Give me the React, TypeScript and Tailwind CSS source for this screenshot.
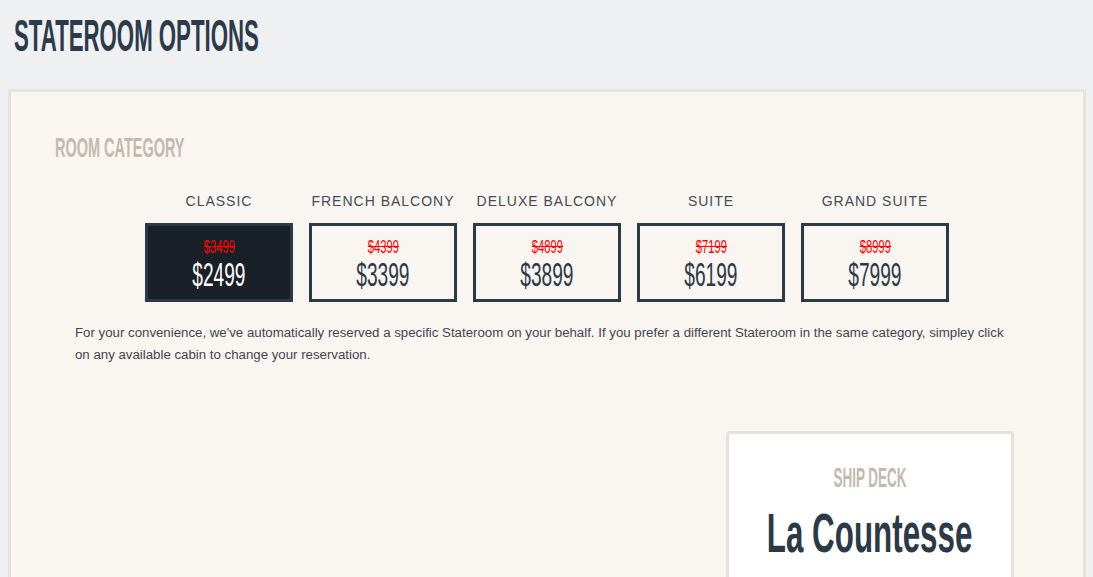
import React from 'react';

const categories = [
  { name: 'CLASSIC', was: '$3499', now: '$2499', selected: true },
  { name: 'FRENCH BALCONY', was: '$4399', now: '$3399' },
  { name: 'DELUXE BALCONY', was: '$4899', now: '$3899' },
  { name: 'SUITE', was: '$7199', now: '$6199' },
  { name: 'GRAND SUITE', was: '$8999', now: '$7999' },
];

const display = { fontFamily: '"Liberation Sans", Arial, sans-serif' };

export default function App() {
  return (
    <div className="min-h-[577px] bg-[#eff0f2] overflow-hidden" style={display}>
      {/* Page title */}
      <div className="pl-[14px] pt-[14px] h-[89px]">
        <h1 className="inline-block origin-left scale-x-[0.505] text-[44px] leading-[44px] font-bold text-[#2c3a4a] whitespace-nowrap">
          STATEROOM OPTIONS
        </h1>
      </div>

      {/* Options panel */}
      <div className="ml-2 mr-[7px] border-[3px] border-[#e6e2dc] bg-[#f9f5f0] pt-[42px] pb-10 h-[600px]">
        <h2 className="ml-[44px] inline-block origin-left scale-x-[0.517] text-[28px] leading-[28px] font-bold text-[#c3b9ae] whitespace-nowrap">
          ROOM CATEGORY
        </h2>

        <div className="mt-[27px] flex justify-center gap-4">
          {categories.map((c) => (
            <div key={c.name} className="w-[148px] flex flex-col items-center">
              <div className="text-[14px] leading-5 tracking-[1px] text-[#454c55] whitespace-nowrap">
                {c.name}
              </div>
              <button
                className={`mt-3 w-[148px] h-[79px] border-[3px] border-[#2c3a48] flex flex-col items-center pt-[11px] ${
                  c.selected ? 'bg-[#1a2028] text-white' : 'bg-transparent text-[#2c3a48]'
                }`}
              >
                <span className="inline-block scale-x-[0.59] text-[19px] leading-[19px] text-[#ff0000] line-through">
                  {c.was}
                </span>
                <span className="mt-[2px] inline-block scale-x-[0.58] text-[33px] leading-[33px]">
                  {c.now}
                </span>
              </button>
            </div>
          ))}
        </div>

        <p className="mx-16 mt-[20px] text-[13.25px] leading-[22px] text-[#3f4651]">
          For your convenience, we've automatically reserved a specific Stateroom on your behalf. If you prefer a different
          Stateroom in the same category, simpley click on any available cabin to change your reservation.
        </p>

        {/* Ship deck card */}
        <div className="mt-[65px] flex justify-end mr-[69px]">
          <div className="w-[288px] h-[220px] rounded border-[3px] border-[#e6e2dc] bg-white flex flex-col items-center pt-[30px]">
            <div className="inline-block scale-x-[0.48] text-[28px] leading-[28px] font-bold text-[#c3b9ae] whitespace-nowrap">
              SHIP DECK
            </div>
            <div className="mt-[13px] inline-block scale-x-[0.56] text-[56px] leading-[56px] font-bold text-[#2c3a48] whitespace-nowrap">
              La Countesse
            </div>
          </div>
        </div>
      </div>
    </div>
  );
}
